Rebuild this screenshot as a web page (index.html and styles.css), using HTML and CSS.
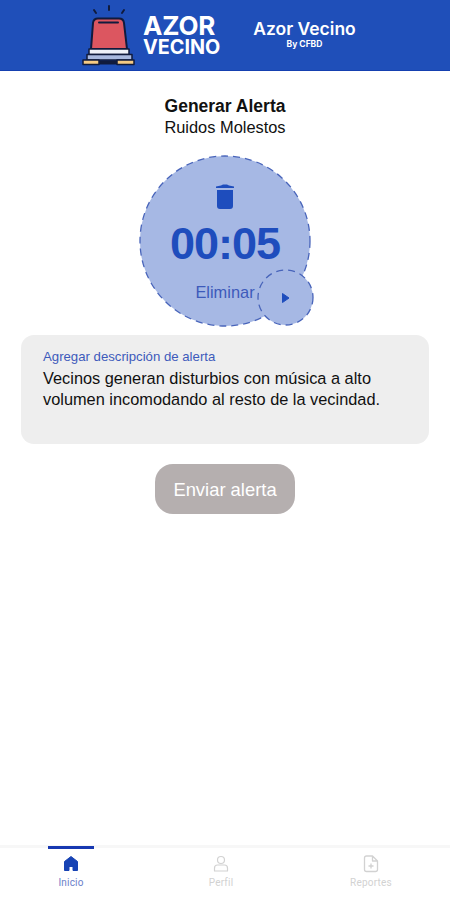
FILE: index.html
```html
<!DOCTYPE html>
<html lang="es">
<head>
  <meta charset="UTF-8">
  <meta name="viewport" content="width=device-width, initial-scale=1.0">
  <title>Azor Vecino - Generar Alerta</title>
  <link rel="stylesheet" href="styles.css">
</head>
<body>
  <!-- Header -->
  <header>
    <div class="logo">
      <svg class="siren" width="54" height="64" viewBox="0 0 54 64">
        <g stroke="#101b3d" stroke-width="2" stroke-linecap="round" stroke-linejoin="round">
          <path d="M12 5l2 3M27 1v4M42 5l-2 3" fill="none"/>
          <path d="M9 44L11 18q.5-4.500 5-4.500H37q4.500 0 5 4.500L45 44z" fill="#dc5660"/>
          <path d="M17 17.500H36" fill="none"/>
          <path d="M7 44H47V49.500H7z" fill="#eef1f8" stroke-width="1.500"/>
          <path d="M5 49.500H50V55H5z" fill="#a9b9df" stroke-width="1.500"/>
          <path d="M1 55H17V59.500H1zM35 55H52V59.500H35z" fill="#f5cb83" stroke-width="1.500"/>
          <path d="M17 57.500H35" stroke-width="4" stroke-linecap="butt"/>
        </g>
      </svg>
      <div class="logo-text">
        <span class="logo-azor">AZOR</span>
        <span class="logo-vecino">VECINO</span>
      </div>
    </div>
    <div class="brand">
      <div class="brand-name">Azor Vecino</div>
      <div class="brand-by">By CFBD</div>
    </div>
  </header>

  <!-- Alerta -->
  <main>
    <h1>Generar Alerta</h1>
    <div class="alert-type">Ruidos Molestos</div>

    <div class="recorder">
      <svg class="ring" width="172" height="172" viewBox="0 0 172 172">
        <circle cx="86" cy="86" r="85" fill="#a6b8e4" stroke="#4864ba" stroke-width="1.300" stroke-dasharray="7 5"/>
      </svg>
      <div class="recorder-content">
        <svg class="trash" width="20" height="26" viewBox="0 0 20 26">
          <path d="M1 4V2.500L6 1.500L8 .5H12L14 1.500L19 2.500V4zM2 6H18V22q0 3-3 3H5q-3 0-3-3z" fill="#1e4dbd"/>
        </svg>
        <div class="time">00:05</div>
        <div class="delete">Eliminar</div>
      </div>
      <svg class="play" width="57" height="57" viewBox="0 0 57 57">
        <circle cx="28.500" cy="28.500" r="27.500" fill="#a6b8e4" stroke="#4864ba" stroke-width="1.300" stroke-dasharray="7 5"/>
        <path d="M25.500 24.500L32 29L25.500 33.500z" fill="#1e4dbd" stroke="#1e4dbd" stroke-linejoin="round"/>
      </svg>
    </div>

    <div class="description">
      <div class="description-label">Agregar descripción de alerta</div>
      <div class="description-text">Vecinos generan disturbios con música a alto<br>volumen incomodando al resto de la vecindad.</div>
    </div>

    <button class="send-btn">Enviar alerta</button>
  </main>

  <!-- Barra inferior -->
  <nav>
    <a class="active">
      <svg width="18" height="18" viewBox="0 0 18 18">
        <path d="M9 1.500L2.500 6.500V15.500H7V11.500H11V15.500H15.500V6.500z" fill="#1743b4" stroke="#1743b4" stroke-linejoin="round"/>
      </svg>
      <span>Inicio</span>
    </a>
    <a>
      <svg width="18" height="18" viewBox="0 0 18 18" fill="none" stroke="#d2d2d2" stroke-width="1.200">
        <circle cx="9" cy="5" r="3.500"/>
        <path d="M2.500 16V13q0-3 3-3H12.500q3 0 3 3V16z" stroke-linejoin="round"/>
      </svg>
      <span>Perfil</span>
    </a>
    <a>
      <svg width="18" height="18" viewBox="0 0 18 18" fill="none" stroke="#d2d2d2" stroke-width="1.300" stroke-linejoin="round">
        <path d="M10.500 1H4.500Q2.500 1 2.500 3V14.500q0 2 2 2H13.500q2 0 2-2V6zM10.500 1V6H15.500"/>
        <path d="M9 8.500V13.500M6.500 11H11.500"/>
      </svg>
      <span>Reportes</span>
    </a>
  </nav>
</body>
</html>
```
FILE: styles.css
```css
:root {
  --main-blue: #1f4fb9;
  --text-blue: #3d5abb;
}
* {
  box-sizing: border-box;
}
body {
  font-family: "Liberation Sans", Arial, sans-serif;
  background: #fff;
  margin: 0;
  height: 900px;
  color: #111;
  display: flex;
  flex-direction: column;
  overflow: hidden;
}
/* Header */
header {
  background: var(--main-blue);
  border-bottom: 1px solid #1540b0;
  height: 71px;
  display: flex;
  flex-shrink: 0;
  padding-left: 82px;
  color: #fff;
  font-family: Inter, sans-serif;
  white-space: nowrap;
}
.logo {
  display: flex;
  width: 171px;
  padding-top: 5px;
}
.logo-text {
  display: flex;
  flex-direction: column;
  margin-left: 7px;
  padding-top: 8px;
  font-weight: 700;
}
.logo-azor {
  font-size: 26px;
  line-height: 26px;
  letter-spacing: -0.2px;
}
.logo-vecino {
  font-size: 19.800px;
  line-height: 17px;
}
.brand {
  width: 103px;
  padding-top: 18px;
  text-align: center;
}
.brand-name {
  font-size: 17.500px;
  line-height: 22px;
  font-weight: 600;
}
.brand-by {
  font-size: 8.500px;
  line-height: 9px;
  font-weight: 700;
}
/* Alerta */
main {
  flex: 1;
  display: flex;
  flex-direction: column;
  align-items: center;
  padding-top: 25px;
}
h1 {
  margin: 0;
  font-size: 17.500px;
  line-height: 21px;
}
.alert-type {
  font-size: 16.400px;
  line-height: 20px;
}
/* Temporizador */
.recorder {
  position: relative;
  width: 172px;
  height: 172px;
  margin-top: 18px;
}
.ring {
  position: absolute;
  top: 0;
  left: 0;
}
.recorder-content {
  position: relative;
  display: flex;
  flex-direction: column;
  align-items: center;
  padding-top: 29px;
  color: #1e4dbd;
}
.time {
  margin-top: 9px;
  font-size: 45px;
  line-height: 50px;
  font-weight: 700;
  letter-spacing: -1px;
}
.delete {
  margin-top: 13px;
  font-size: 16.400px;
  line-height: 20px;
  color: var(--text-blue);
}
.play {
  position: absolute;
  right: -3px;
  bottom: 1px;
}
/* Descripción */
.description {
  width: 408px;
  height: 109px;
  margin-top: 8px;
  padding: 12px 22px;
  border-radius: 13px;
  background: #eee;
  white-space: nowrap;
}
.description-label {
  font-size: 13.200px;
  line-height: 19px;
  color: var(--text-blue);
}
.description-text {
  margin-top: 2px;
  font-size: 16.350px;
  line-height: 21px;
}
.send-btn {
  width: 140px;
  height: 50px;
  margin-top: 20px;
  padding: 1px 0 0;
  border: none;
  border-radius: 18px;
  background: #b5afaf;
  color: #fff;
  font-family: inherit;
  font-size: 18.400px;
}
/* Barra inferior */
nav {
  height: 55px;
  display: flex;
  flex-shrink: 0;
  justify-content: space-between;
  padding: 0 56px 0 48px;
  border-top: 3px solid #f7f7f7;
  font-family: Roboto, sans-serif;
  font-size: 10px;
}
nav a {
  display: flex;
  flex-direction: column;
  align-items: center;
  width: 46px;
  padding-top: 7px;
  color: #d2d2d2;
}
nav a svg {
  flex-shrink: 0;
}
nav a span {
  margin-top: 3px;
  line-height: 13px;
  letter-spacing: 0.2px;
}
nav a.active {
  margin-top: -2px;
  padding-top: 6px;
  border-top: 3px solid #1738b1;
  color: #6b80ca;
}
```
